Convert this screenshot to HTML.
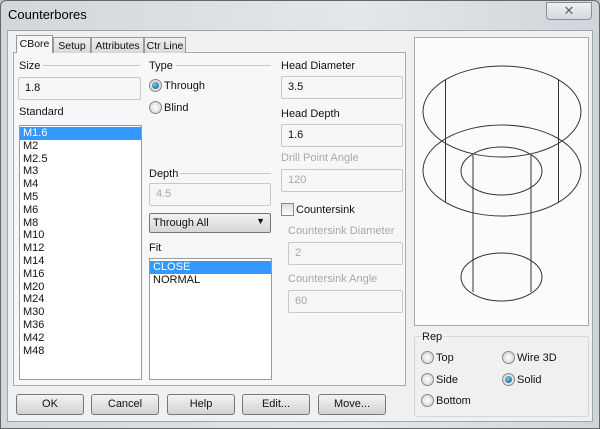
<!DOCTYPE html><html><head><style>
*{margin:0;padding:0;box-sizing:border-box}
body{width:600px;height:429px;overflow:hidden;font-family:"Liberation Sans",sans-serif;font-size:11px;color:#111;background:#bfc4c9;position:relative}
.a{position:absolute;white-space:nowrap}
.frame{left:0;top:0;width:600px;height:429px;background:linear-gradient(90deg,#d2d7dc,#e4e7ea 60%,#d0d5da);border:1px solid #666;border-radius:6px 6px 0 0}
.client{left:7px;top:30px;width:586px;height:392px;background:#f0f0f0;border:1px solid #9aa}
.inp{background:#f6f6f6;border:1px solid #c8c8c8;border-radius:2px;padding:4px 0 0 6px;height:23px}
.list{background:#fff;border:1px solid #9a9a9a}
.list div{height:12.8px;line-height:12.8px;padding-left:3px}
.sel{background:#3399ff;color:#fff}
.lbl{line-height:12px}
.gray{color:#a8a8a8}
.line{height:1px;background:#c8c8c8}
.radio{width:13px;height:13px;border-radius:50%;border:1px solid #888;background:radial-gradient(#fff,#ccc)}
.radio.on::after{content:"";position:absolute;left:2px;top:2px;width:7px;height:7px;border-radius:50%;background:radial-gradient(circle at 40% 35%,#7cd,#0a4f8a)}
.btn{top:394px;height:21px;width:68px;border:1px solid #777;border-radius:3px;background:linear-gradient(#f4f4f4,#e2e2e2 50%,#d3d3d3);text-align:center;line-height:19px}
.tab{top:37px;height:16px;border:1px solid #999;border-bottom:none;background:linear-gradient(#f0f0f0,#d8d8d8);padding:2px 0 0;text-align:center;line-height:12px;font-size:10.5px}
</style></head><body>
<div class="a frame"></div>
<div class="a" style="left:8px;top:7px;font-size:13px;color:#000">Counterbores</div>
<div class="a" style="left:546px;top:2px;width:46px;height:18px;border:1px solid #8a9097;border-radius:0 0 4px 4px;background:linear-gradient(#eef0f2,#d5d9dd);text-align:center;font-size:13px;line-height:16px;color:#666">✕</div>
<div class="a client"></div>
<div class="a" style="left:13px;top:52px;width:393px;height:334px;border:1px solid #a9a9a9;background:#f7f7f7"></div>
<div class="a tab" style="left:16px;top:35px;height:18px;background:#f7f7f7;width:37px;z-index:2">CBore</div>
<div class="a tab" style="left:53px;width:38px">Setup</div>
<div class="a tab" style="left:91px;width:53px">Attributes</div>
<div class="a tab" style="left:144px;width:42px">Ctr Line</div>

<div class="a lbl" style="left:19px;top:60px">Size</div><div class="a line" style="left:43px;top:65px;width:97px"></div>
<div class="a inp" style="left:18px;top:77px;width:123px">1.8</div>
<div class="a lbl" style="left:19px;top:106px">Standard</div>
<div class="a list" style="left:19px;top:125px;width:123px;height:255px;padding-top:1px">
<div class="sel">M1.6</div><div>M2</div><div>M2.5</div><div>M3</div><div>M4</div><div>M5</div><div>M6</div><div>M8</div><div>M10</div><div>M12</div><div>M14</div><div>M16</div><div>M20</div><div>M24</div><div>M30</div><div>M36</div><div>M42</div><div>M48</div></div>

<div class="a lbl" style="left:149px;top:60px">Type</div><div class="a line" style="left:176px;top:65px;width:95px"></div>
<div class="a radio on" style="left:149px;top:79px"></div><div class="a lbl" style="left:164px;top:80px">Through</div>
<div class="a radio" style="left:149px;top:101px"></div><div class="a lbl" style="left:164px;top:102px">Blind</div>
<div class="a lbl" style="left:149px;top:168px">Depth</div><div class="a line" style="left:180px;top:173px;width:91px"></div>
<div class="a inp gray" style="left:149px;top:183px;width:122px">4.5</div>
<div class="a" style="left:149px;top:213px;width:122px;height:20px;border:1px solid #777;border-radius:2px;background:linear-gradient(#f2f2f2,#d6d6d6);padding:3px 0 0 3px">Through All<span style="position:absolute;right:5px;top:2px;font-size:9px">▼</span></div>
<div class="a lbl" style="left:149px;top:242px">Fit</div>
<div class="a list" style="left:149px;top:258px;width:123px;height:122px;padding-top:2px"><div class="sel">CLOSE</div><div>NORMAL</div></div>

<div class="a lbl" style="left:281px;top:60px">Head Diameter</div>
<div class="a inp" style="left:281px;top:76px;width:122px">3.5</div>
<div class="a lbl" style="left:281px;top:108px">Head Depth</div>
<div class="a inp" style="left:281px;top:124px;width:122px">1.6</div>
<div class="a lbl gray" style="left:281px;top:152px">Drill Point Angle</div>
<div class="a inp gray" style="left:281px;top:169px;width:122px">120</div>
<div class="a" style="left:281px;top:203px;width:13px;height:13px;border:1px solid #888;background:linear-gradient(#ddd,#fff)"></div>
<div class="a lbl" style="left:296px;top:204px">Countersink</div>
<div class="a lbl gray" style="left:288px;top:225px">Countersink Diameter</div>
<div class="a inp gray" style="left:288px;top:242px;width:115px">2</div>
<div class="a lbl gray" style="left:288px;top:273px">Countersink Angle</div>
<div class="a inp gray" style="left:288px;top:290px;width:115px">60</div>

<div class="a" style="left:414px;top:37px;width:175px;height:289px;background:#fbfbfb;border:1px solid #aaa"></div>
<svg class="a" style="left:0;top:0" width="600" height="429" fill="none" stroke="#333" stroke-width="1">
<ellipse cx="502" cy="111.5" rx="79" ry="45.5"/><ellipse cx="502" cy="170.5" rx="79" ry="45.5"/>
<path d="M445.5 80V202M558.5 80V202M473 155V292M531 155V292"/>
<ellipse cx="501.5" cy="171" rx="40.5" ry="24"/><ellipse cx="501.5" cy="277" rx="40.5" ry="24"/>
</svg>

<div class="a" style="left:414px;top:336px;width:175px;height:81px;border:1px solid #d6d6d6;border-radius:3px"></div>
<div class="a lbl" style="left:421px;top:331px;background:#f0f0f0;padding:0 1px">Rep</div>
<div class="a radio" style="left:421px;top:351px"></div><div class="a lbl" style="left:436px;top:352px">Top</div>
<div class="a radio" style="left:421px;top:373px"></div><div class="a lbl" style="left:436px;top:374px">Side</div>
<div class="a radio" style="left:421px;top:394px"></div><div class="a lbl" style="left:436px;top:395px">Bottom</div>
<div class="a radio" style="left:502px;top:351px"></div><div class="a lbl" style="left:517px;top:352px">Wire 3D</div>
<div class="a radio on" style="left:502px;top:373px"></div><div class="a lbl" style="left:517px;top:374px">Solid</div>

<div class="a btn" style="left:16px">OK</div>
<div class="a btn" style="left:91px">Cancel</div>
<div class="a btn" style="left:167px">Help</div>
<div class="a btn" style="left:242px">Edit...</div>
<div class="a btn" style="left:318px">Move...</div>
</body></html>
